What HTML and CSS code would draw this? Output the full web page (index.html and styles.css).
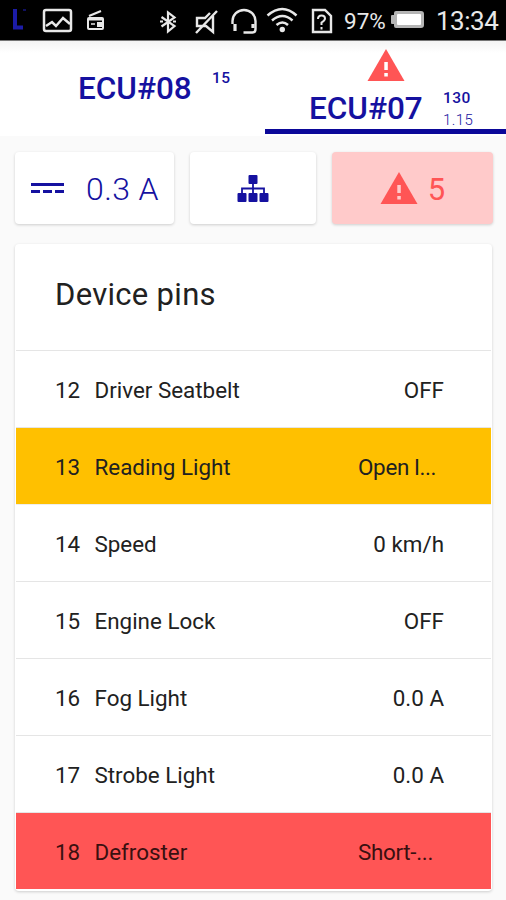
FILE: index.html
```html
<!DOCTYPE html>
<html lang="en">
<head>
<meta charset="utf-8">
<title>ECU monitor</title>
<link rel="stylesheet" href="styles.css">
</head>
<body>
<header class="status">
  <svg class="status-icons" width="340" height="40" viewBox="0 0 340 40" fill="none" stroke="#e8e8e8" stroke-width="2">
    <path d="M15 9v18.500h8" stroke="#1c1ca8" stroke-width="4"/><path d="M23 10h3" stroke="#101060"/>
    <rect x="44" y="10" width="27" height="21" rx="2" stroke-width="2.500"/><path d="M46 26l6-4 4 4 7-8 7 6" stroke-width="2.500"/>
    <rect x="88" y="18" width="15" height="11" rx="1"/><path d="M89 16l12-5M88 19.500h15" stroke-width="2.200"/><path d="M91 24h4" stroke-width="1.500"/><path d="M97 22h5v5h-5z" fill="#e8e8e8" stroke="none"/>
    <path d="M161.500 17l13 9-6.500 5.500v-19l6.500 5-13 9" stroke-width="2.200"/><path d="M160 21.500h3M173 21.500h3"/>
    <path d="M213 16v16l-7-6h-9v-8h8l5-5M196 33l21-22" stroke-width="2.400"/>
    <path d="M232.500 24v-3a11.500 11 0 0 1 23 0v8q0 3.500-3 3.500h-9" stroke-width="2.400"/><path d="M235 24v7M253 24v4" stroke-width="3.200"/>
    <path d="M267.500 15.500q15-13 29 0M272 20.500q10.500-9 20.500 0M276.500 25q6-5 11.500 0" stroke-width="2.500"/><circle cx="282.300" cy="29.500" r="2.700" fill="#e8e8e8" stroke="none"/>
    <path d="M313 10h12l6 6v16h-18z" stroke-width="2.400"/><path d="M318 19q0-3.500 3.500-3.500t3.500 3q0 2-3.500 4v2.500M321.500 27v2.500"/>
  </svg>
  <span class="percent">97%</span>
  <svg class="battery" width="33" height="20" viewBox="0 0 33 20"><path d="M5 0h25q3 0 3 3v11q0 3-3 3h-25q-2 0-2-2v-2h-2q-1 0-1-1v-7q0-1 1-1h2v-2q0-2 2-2z" fill="#b5b5b5"/><rect x="6" y="3" width="24" height="11" rx="1" fill="#fff"/></svg>
  <time class="clock">13:34</time>
</header>
<nav class="tabs">
  <a class="tab">
    <strong class="ecu">ECU#08</strong>
    <span class="meta"><b>15</b></span>
  </a>
  <a class="tab active">
    <svg class="warn" width="38" height="32" viewBox="0 0 38 32"><path d="M19 0l18.500 32h-37z" fill="#ff5555"/><path d="M17.300 13h3.500v8h-3.500zM17.300 24h3.500v3.500h-3.500z" fill="#fff"/></svg>
    <strong class="ecu">ECU#07</strong>
    <span class="meta"><b>130</b><small>1.15</small></span>
  </a>
</nav>
<main>
  <section class="summary">
    <div class="card current">
      <svg width="33" height="12" viewBox="0 0 33 12" stroke="#1511a0" stroke-width="3"><path d="M0 2.500h33"/><path d="M0 9.500h9M12 9.500h9M24 9.500h9"/></svg>
      <span>0.3 A</span>
    </div>
    <div class="card">
      <svg width="32" height="27" viewBox="0 0 32 27"><g fill="#1511a0"><rect x="11.500" width="9" height="9" rx="1"/><rect x=".5" y="18" width="9" height="9" rx="1"/><rect x="11.500" y="18" width="9" height="9" rx="1"/><rect x="22.500" y="18" width="9" height="9" rx="1"/></g><path d="M16 8v10M5 18v-4.500h22v4.500" fill="none" stroke="#1511a0" stroke-width="1.800"/></svg>
    </div>
    <div class="card alert">
      <svg class="alert-icon" width="38" height="32" viewBox="0 0 38 32"><path d="M19 0l18.500 32h-37z" fill="#ff5555"/><path d="M17.300 13h3.500v8h-3.500zM17.300 24h3.500v3.500h-3.500z" fill="#ffcaca"/></svg>
      <span>5</span>
    </div>
  </section>
  <section class="panel">
    <h1>Device pins</h1>
    <ul class="pins">
      <li><span class="num">12</span><span class="name">Driver Seatbelt</span><span class="value">OFF</span></li>
      <li class="open"><span class="num">13</span><span class="name">Reading Light</span><span class="value cut">Open l...</span></li>
      <li><span class="num">14</span><span class="name">Speed</span><span class="value">0 km/h</span></li>
      <li><span class="num">15</span><span class="name">Engine Lock</span><span class="value">OFF</span></li>
      <li><span class="num">16</span><span class="name">Fog Light</span><span class="value">0.0 A</span></li>
      <li><span class="num">17</span><span class="name">Strobe Light</span><span class="value">0.0 A</span></li>
      <li class="short"><span class="num">18</span><span class="name">Defroster</span><span class="value cut">Short-...</span></li>
    </ul>
  </section>
</main>
</body>
</html>
```
FILE: styles.css
```css
* { box-sizing: border-box; }
body { margin: 0; height: 900px; overflow: hidden; background: #fafafa; color: #212121; font-family: Roboto, sans-serif; }
.status { display: flex; height: 41px; background: #000; border-bottom: 1px solid #757575; color: #e8e8e8; }
.status-icons { flex: none; }
.percent { width: 51px; padding-left: 4px; font-size: 22.5px; line-height: 43px; white-space: nowrap; }
.battery { flex: none; margin-top: 11px; }
.clock { margin-left: 12px; font-size: 26px; line-height: 42px; letter-spacing: -0.5px; white-space: nowrap; }
.tabs { display: flex; height: 95px; background: linear-gradient(#f4f4f4, #fff 12px); color: #1511a0; }
.tab { position: relative; display: flex; width: 265px; padding: 29px 0 0 78px; }
.tab.active { width: 241px; padding: 49px 0 0 44px; border-bottom: 5px solid #0b0899; margin-bottom: 2px; }
.warn { position: absolute; left: 102px; top: 8px; }
.ecu { width: 134px; font-size: 31.5px; line-height: 38px; font-weight: 500; }
.meta { display: flex; flex-direction: column; margin-top: -1px; font-size: 15.5px; line-height: 18px; letter-spacing: .4px; }
.tab.active .meta { line-height: 22px; margin-top: -3px; }
.meta b { font-weight: 500; }
.meta small { font-size: 15px; font-weight: 300; }
main { padding: 16px 15px 0; }
.summary { display: flex; gap: 16px; width: 478px; height: 72px; }
.card { display: flex; align-items: center; justify-content: center; width: 126px; background: #fff; border-radius: 4px; box-shadow: 0 1px 3px rgba(0,0,0,.18); font-size: 32px; color: #1511a0; }
.card span { position: relative; top: 1px; }
.card.current { width: 159px; justify-content: flex-start; padding-left: 16px; gap: 22px; font-weight: 300; letter-spacing: .4px; }
.card.alert { width: 161px; gap: 10px; background: #ffcaca; color: #ff5555; font-size: 31px; }
.alert-icon { margin-top: -1px; }
.panel { width: 477px; height: 647px; margin-top: 20px; padding: 0 1px; background: #fff; border-radius: 4px; box-shadow: 0 1px 3px rgba(0,0,0,.18); }
h1 { height: 107px; margin: 0; padding: 32px 39px; border-bottom: 1px solid #e5e5e5; font-size: 31px; line-height: 38px; letter-spacing: .3px; font-weight: 400; }
.pins { margin: 0; padding: 0; list-style: none; }
.pins li { display: flex; align-items: center; height: 77px; padding: 2px 47px 0 39px; border-bottom: 1px solid #e5e5e5; font-size: 22.4px; }
.pins .open { background: #ffc000; border-color: #eee; }
.pins .short { height: 76px; background: #ff5555; color: #3a1010; border: 0; }
.num { width: 39.5px; letter-spacing: -.2px; }
.name { flex: 1; }
.value.cut { width: 86px; letter-spacing: -.3px; }
```
